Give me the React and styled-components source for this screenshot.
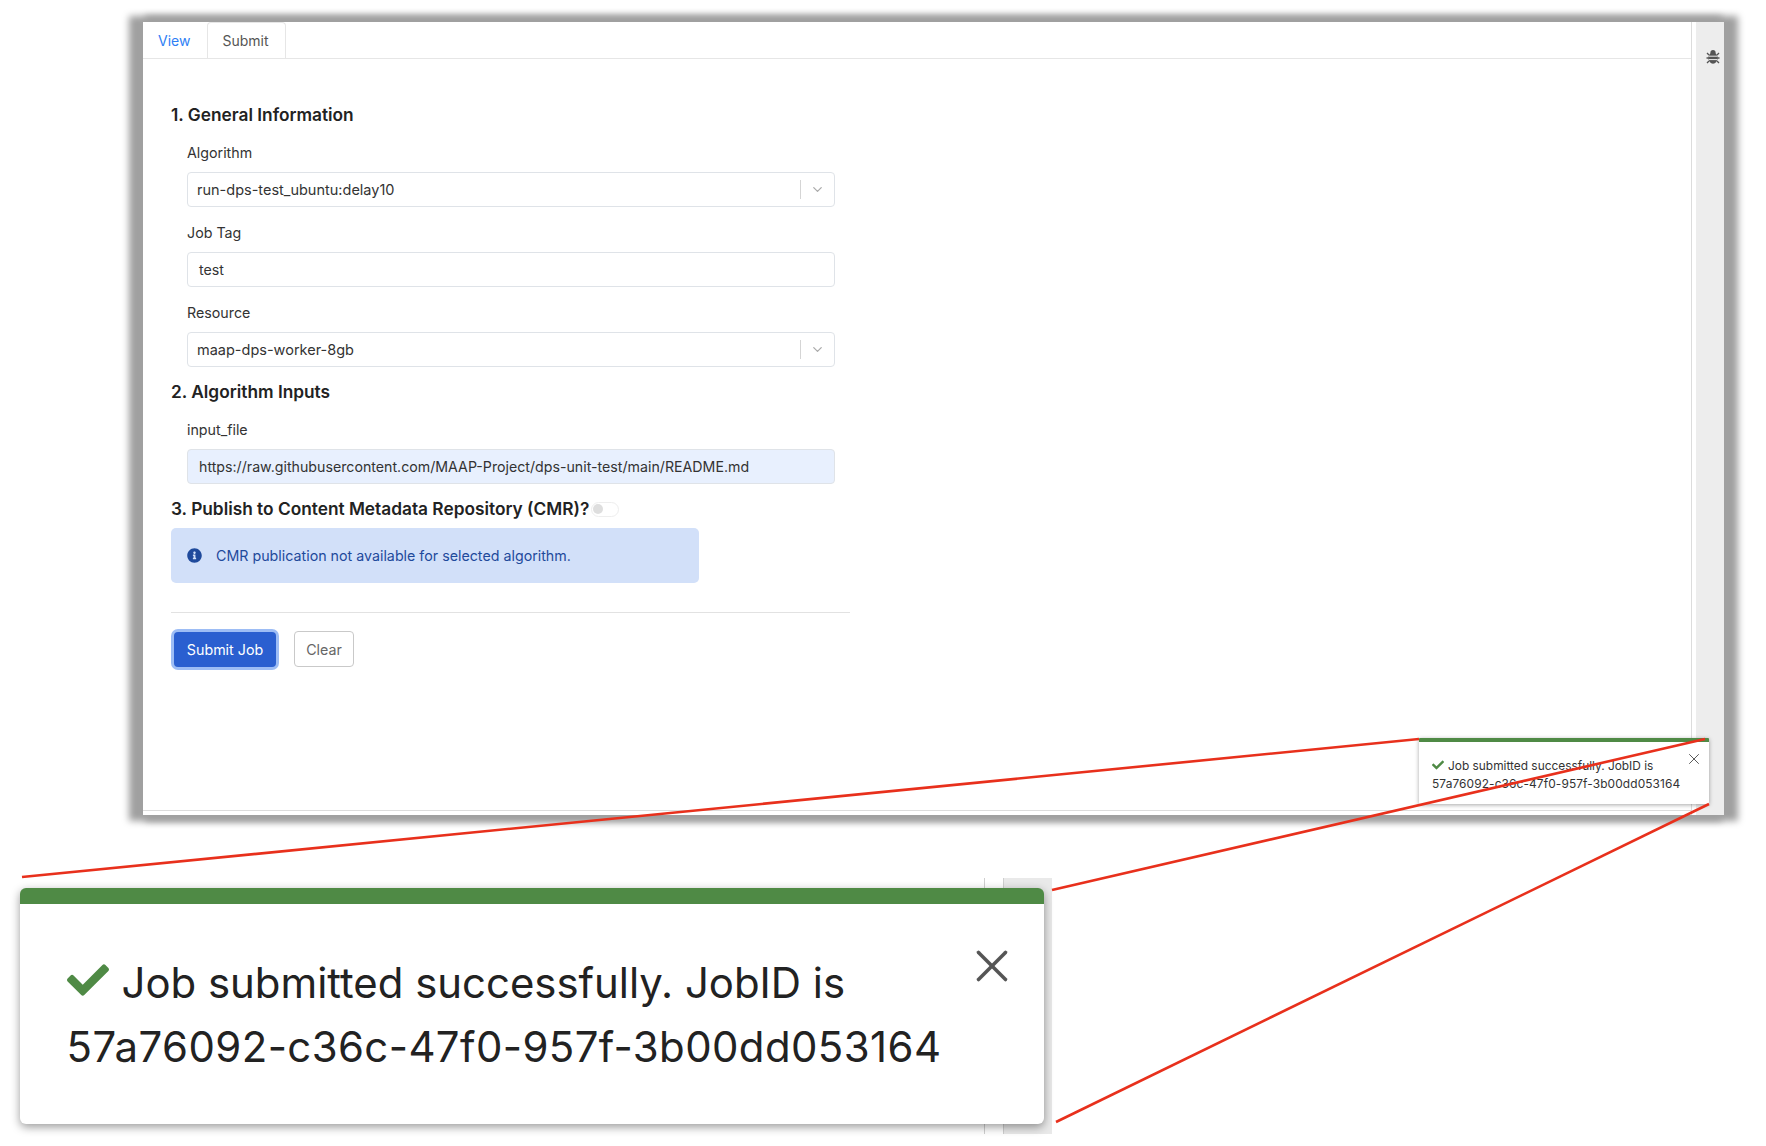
import React from "react";
import styled, { createGlobalStyle } from "styled-components";
import { ChevronDown, X } from "lucide-react";
import { FaCheck, FaInfoCircle } from "react-icons/fa";

const GlobalStyle = createGlobalStyle`
  body {
    margin: 0;
    background: #fff;
    font-family: Inter, "Liberation Sans", sans-serif;
    color: #222;
  }
`;

const Page = styled.div`
  position: relative;
  width: 1766px;
  height: 1146px;
  padding: 22px 0 0 143px;
  box-sizing: border-box;
  overflow: hidden;
`;

const Window = styled.div`
  position: relative;
  display: flex;
  width: 1581px;
  height: 793px;
  background: #fff;
  box-shadow: -8px 0 7px 6px #a0a0a0, 8px 0 7px 6px #a0a0a0;
`;

const Main = styled.div`
  display: flex;
  flex-direction: column;
  width: 1549px;
  border-right: 1px solid #dcdcdc;
`;

const Sidebar = styled.aside`
  display: flex;
  justify-content: center;
  width: 28px;
  margin-left: 4px;
  padding: 28px 0 0 5px;
  box-sizing: border-box;
  background: #ededed;
`;

const Tabs = styled.div`
  display: flex;
  height: 37px;
  border-bottom: 1px solid #e6e6e6;
  box-sizing: border-box;
`;

const Tab = styled.div`
  display: flex;
  align-items: center;
  padding: 0 16px 0 14px;
  font-size: 14px;
  color: ${(props) => (props.$active ? "#555" : "#2f7ff5")};
  border: 1px solid ${(props) => (props.$active ? "#e6e6e6" : "transparent")};
  border-bottom: none;
  border-radius: 4px 4px 0 0;
`;

const Content = styled.div`
  flex: 1;
  width: 679px;
  padding: 44px 0 0 28px;
`;

const Heading = styled.h3`
  display: flex;
  align-items: center;
  margin: 0;
  font-size: 17.3px;
  line-height: 24px;
  font-weight: 600;
  color: #222;
`;

const Fields = styled.div`
  display: flex;
  flex-direction: column;
  gap: 16.5px;
  width: 648px;
  margin: 16px 0 13.5px 16px;
`;

const Field = styled.div`
  display: flex;
  flex-direction: column;
  gap: 8px;
`;

const Label = styled.label`
  font-size: 14.25px;
  line-height: 20.5px;
  color: #333;
`;

const Control = styled.div`
  display: flex;
  align-items: center;
  height: 35px;
  box-sizing: border-box;
  padding-left: ${(props) => (props.$select ? "9px" : "11px")};
  border: 1px solid #dfe3e8;
  border-radius: 4px;
  font-size: ${(props) => (props.$select ? "14.5px" : "14.2px")};
  color: #333;
  background: ${(props) => (props.$filled ? "#e8f0fe" : "#fff")};
`;

const SelectValue = styled.span`
  flex: 1;
`;

const SelectCaret = styled.span`
  display: flex;
  align-items: center;
  justify-content: center;
  width: 33px;
  height: 19px;
  border-left: 1px solid #d5d5d5;
  color: #aaa;
`;

const Toggle = styled.span`
  display: inline-flex;
  align-items: center;
  width: 28px;
  height: 15px;
  margin-left: 2px;
  padding-left: 1px;
  box-sizing: border-box;
  border: 1px solid #eee;
  border-radius: 8px;
  &::before {
    content: "";
    width: 10px;
    height: 10px;
    border-radius: 50%;
    background: #dedede;
  }
`;

const Alert = styled.div`
  display: flex;
  align-items: center;
  gap: 14px;
  width: 528px;
  height: 55px;
  margin-top: 7px;
  padding-left: 16px;
  box-sizing: border-box;
  background: #d2e0f9;
  border-radius: 5px;
  font-size: 14.25px;
  color: #1f4a9c;
`;

const Divider = styled.hr`
  width: 679px;
  margin: 29px 0 18px;
  border: none;
  border-top: 1px solid #e2e2e2;
`;

const Buttons = styled.div`
  display: flex;
  align-items: center;
  gap: 18px;
  padding-left: 3px;
`;

const Button = styled.button`
  height: ${(props) => (props.$primary ? "35px" : "36px")};
  width: ${(props) => (props.$primary ? "102px" : "60px")};
  padding: 0;
  font-family: inherit;
  font-size: 14.25px;
  border-radius: 4px;
  color: ${(props) => (props.$primary ? "#fff" : "#666")};
  background: ${(props) => (props.$primary ? "#2a5fd0" : "#fff")};
  border: ${(props) => (props.$primary ? "none" : "1px solid #c9c9c9")};
  box-shadow: ${(props) => (props.$primary ? "0 0 0 3px #9dbdf5" : "none")};
`;

const PageFooter = styled.div`
  height: 4px;
  border-top: 1px solid #dcdcdc;
`;

const Toast = styled.div`
  position: ${(props) => (props.$big ? "relative" : "absolute")};
  right: ${(props) => (props.$big ? "auto" : "15px")};
  bottom: ${(props) => (props.$big ? "auto" : "11px")};
  width: ${(props) => (props.$big ? "1024px" : "290px")};
  height: ${(props) => (props.$big ? "236px" : "66px")};
  box-sizing: border-box;
  padding: ${(props) => (props.$big ? "47px 0 0 47px" : "15px 0 0 13px")};
  background: #fff;
  border-top: ${(props) => (props.$big ? "16px" : "4px")} solid #4f8a45;
  border-radius: ${(props) => (props.$big ? "6px" : "1px")};
  box-shadow: ${(props) =>
    props.$big ? "0 3px 10px rgba(0, 0, 0, 0.4)" : "0 1px 4px rgba(0, 0, 0, 0.35)"};
  font-size: ${(props) => (props.$big ? "41.9px" : "11.9px")};
  line-height: ${(props) => (props.$big ? "64px" : "18px")};
  color: ${(props) => (props.$big ? "#222" : "#333")};
`;

const JobId = styled.span`
  letter-spacing: 0.01em;
`;

const ToastCheck = styled(FaCheck)`
  color: #4f8a45;
  font-size: ${(props) => (props.$big ? "42px" : "12px")};
  margin-right: ${(props) => (props.$big ? "13px" : "4px")};
  vertical-align: ${(props) => (props.$big ? "-3px" : "-1px")};
`;

const ToastClose = styled(X)`
  position: absolute;
  top: ${(props) => (props.$big ? "35px" : "8px")};
  right: ${(props) => (props.$big ? "25px" : "6px")};
  color: #555;
`;

const Callout = styled.div`
  width: 1042px;
  height: 256px;
  margin: 63px 0 0 -133px;
  padding: 10px 0 0 9.5px;
  box-sizing: border-box;
  background: linear-gradient(
    to right,
    #fff 974px,
    #cfcfcf 974px,
    #cfcfcf 975px,
    #fff 975px,
    #fff 993px,
    #cfcfcf 993px,
    #cfcfcf 994px,
    #e9e9e9 994px
  );
`;

const Annotations = styled.svg`
  position: absolute;
  top: 0;
  left: 0;
  pointer-events: none;
`;

const BugIcon = () => (
  <svg width="14" height="15" viewBox="0 0 14 15">
    <g stroke="#555" strokeWidth="1.3" fill="none">
      <path d="M1 3l2 2M13 3l-2 2M0.5 8h3M13.5 8h-3M1 13l2-2M13 13l-2-2" />
    </g>
    <ellipse cx="7" cy="8" rx="4.6" ry="5.8" fill="#555" />
    <circle cx="7" cy="2.6" r="2.6" fill="#555" />
    <path d="M3 6.2h8M3 9.6h8" stroke="#ededed" strokeWidth="1" />
  </svg>
);

const ToastBody = ({ big }) => (
  <Toast $big={big}>
    <ToastCheck $big={big} />
    Job submitted successfully. JobID is
    <br />
    <JobId>57a76092-c36c-47f0-957f-3b00dd053164</JobId>
    <ToastClose $big={big} size={big ? 54 : 18} strokeWidth={big ? 1.6 : 1.3} />
  </Toast>
);

const App = () => {
  return (
    <Page>
      <GlobalStyle />
      <Window>
        <Main>
          <Tabs>
            <Tab>View</Tab>
            <Tab $active>Submit</Tab>
          </Tabs>
          <Content>
            <Heading>1. General Information</Heading>
            <Fields>
              <Field>
                <Label>Algorithm</Label>
                <Control $select>
                  <SelectValue>run-dps-test_ubuntu:delay10</SelectValue>
                  <SelectCaret>
                    <ChevronDown size={15} />
                  </SelectCaret>
                </Control>
              </Field>
              <Field>
                <Label>Job Tag</Label>
                <Control>test</Control>
              </Field>
              <Field>
                <Label>Resource</Label>
                <Control $select>
                  <SelectValue>maap-dps-worker-8gb</SelectValue>
                  <SelectCaret>
                    <ChevronDown size={15} />
                  </SelectCaret>
                </Control>
              </Field>
            </Fields>
            <Heading>2. Algorithm Inputs</Heading>
            <Fields>
              <Field>
                <Label>input_file</Label>
                <Control $filled>
                  https://raw.githubusercontent.com/MAAP-Project/dps-unit-test/main/README.md
                </Control>
              </Field>
            </Fields>
            <Heading>
              3. Publish to Content Metadata Repository (CMR)?
              <Toggle />
            </Heading>
            <Alert>
              <FaInfoCircle size={15} />
              CMR publication not available for selected algorithm.
            </Alert>
            <Divider />
            <Buttons>
              <Button $primary>Submit Job</Button>
              <Button>Clear</Button>
            </Buttons>
          </Content>
          <PageFooter />
        </Main>
        <Sidebar>
          <BugIcon />
        </Sidebar>
        <ToastBody />
      </Window>
      <Callout>
        <ToastBody big />
      </Callout>
      <Annotations width="1766" height="1146">
        <g stroke="#e8301c" strokeWidth="2.6" fill="none">
          <line x1="1419" y1="739" x2="22" y2="877" />
          <line x1="1705" y1="739" x2="1052" y2="890" />
          <line x1="1709" y1="804" x2="1056" y2="1122" />
        </g>
      </Annotations>
    </Page>
  );
};

export default App;
